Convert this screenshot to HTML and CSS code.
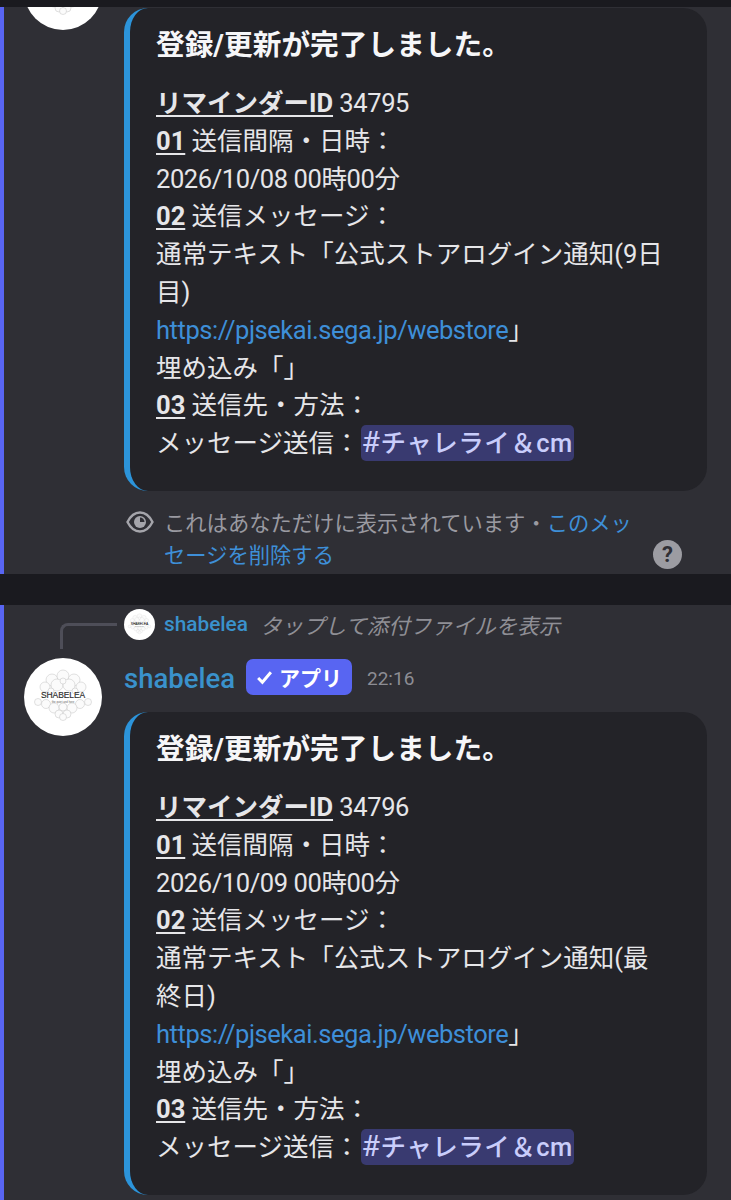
FILE: index.html
```html
<!DOCTYPE html>
<html lang="ja">
<head>
<meta charset="utf-8">
<title>shabelea</title>
<link rel="stylesheet" href="styles.css">
</head>
<body>
<svg class="defs" width="0" height="0" aria-hidden="true">
  <symbol id="logo-art" viewBox="0 0 78 78">
    <circle cx="39" cy="39" r="39" fill="#fff"/>
    <g fill="#fbfbfb" stroke="#bdbdbd" stroke-width=".45">
      <circle cx="28" cy="22" r="6"/><circle cx="39" cy="18" r="6"/><circle cx="50" cy="22" r="6"/>
      <circle cx="21" cy="29" r="5"/><circle cx="33" cy="27" r="6"/><circle cx="45" cy="27" r="6"/><circle cx="57" cy="29" r="5"/>
      <circle cx="27" cy="33" r="3"/><circle cx="39" cy="23" r="3"/><circle cx="51" cy="33" r="3"/>
      <circle cx="14" cy="44" r="3.500"/><circle cx="22" cy="46" r="4.500"/><circle cx="56" cy="46" r="4.500"/><circle cx="64" cy="44" r="3.500"/>
      <circle cx="30" cy="50" r="5"/><circle cx="48" cy="50" r="5"/><circle cx="39" cy="49" r="4"/>
      <circle cx="35" cy="56" r="4"/><circle cx="43" cy="56" r="4"/><circle cx="39" cy="59" r="3.500"/>
    </g>
  </symbol>
  <symbol id="logo" viewBox="0 0 78 78">
    <use href="#logo-art"/>
    <text x="39" y="40" text-anchor="middle" class="logo-name">SHABELEA</text>
    <text x="39" y="45" text-anchor="middle" class="logo-sub">the quiet and here</text>
  </symbol>
</svg>

<main class="page">
  <section class="panel panel-first">
    <div class="message">
      <svg class="avatar avatar-clipped"><use href="#logo-art"/></svg>
      <div class="content">
        <article class="embed">
          <h2 class="embed-title">登録/更新が完了しました。</h2>
          <div class="embed-body">
            <p><b>リマインダーID</b> <span class="num">34795</span></p>
            <p><b>01</b> 送信間隔・日時：</p>
            <p class="num">2026/10/08 00時00分</p>
            <p><b>02</b> 送信メッセージ：</p>
            <p>通常テキスト「公式ストアログイン通知(9日目)</p>
            <p><a class="url" href="#">https://pjsekai.sega.jp/webstore</a>」</p>
            <p>埋め込み「」</p>
            <p><b>03</b> 送信先・方法：</p>
            <p>メッセージ送信：<span class="mention"><span class="hash">#</span>チャレライ＆cm</span></p>
          </div>
        </article>
        <div class="ephemeral">
          <svg class="eye" viewBox="0 0 28 22">
            <path d="M1.500 11C4.500 5 8.500 1.500 14 1.500S23.500 5 26.500 11C23.500 17 19.500 20.500 14 20.500S4.500 17 1.500 11Z" fill="none" stroke="#a5a5ab" stroke-width="2.400"/>
            <circle cx="14" cy="11" r="6" fill="#a5a5ab"/>
            <path d="M14 11V6.500A4.500 4.500 0 0 1 18.500 11Z" fill="#2f2f35"/>
          </svg>
          <p class="ephemeral-text">これはあなただけに表示されています・<a href="#">このメッセージを削除する</a></p>
          <span class="help">?</span>
        </div>
      </div>
    </div>
  </section>

  <section class="panel panel-second">
    <div class="reply">
      <span class="reply-line"></span>
      <svg class="avatar-mini"><use href="#logo"/></svg>
      <span class="reply-name">shabelea</span>
      <em class="reply-text">タップして添付ファイルを表示</em>
    </div>
    <div class="message">
      <svg class="avatar"><use href="#logo"/></svg>
      <div class="content">
        <header class="author">
          <span class="author-name">shabelea</span>
          <span class="app-tag"><svg class="check" viewBox="0 0 16 16"><path d="M2 8.500 6 12.500 14 3" fill="none" stroke="#fff" stroke-width="2.800"/></svg>アプリ</span>
          <time class="time">22:16</time>
        </header>
        <article class="embed">
          <h2 class="embed-title">登録/更新が完了しました。</h2>
          <div class="embed-body">
            <p><b>リマインダーID</b> <span class="num">34796</span></p>
            <p><b>01</b> 送信間隔・日時：</p>
            <p class="num">2026/10/09 00時00分</p>
            <p><b>02</b> 送信メッセージ：</p>
            <p>通常テキスト「公式ストアログイン通知(最終日)</p>
            <p><a class="url" href="#">https://pjsekai.sega.jp/webstore</a>」</p>
            <p>埋め込み「」</p>
            <p><b>03</b> 送信先・方法：</p>
            <p>メッセージ送信：<span class="mention"><span class="hash">#</span>チャレライ＆cm</span></p>
          </div>
        </article>
      </div>
    </div>
  </section>
</main>
</body>
</html>
```

FILE: styles.css
```css
* { box-sizing: border-box; }
html, body { margin: 0; padding: 0; height: 100%; }
body {
  background: #1a1a1f;
  color: #e6e6e9;
  font-family: Roboto, "Noto Sans CJK JP", sans-serif;
  overflow: hidden;
}
.defs { position: absolute; }
.logo-name { font: 400 8.500px "Liberation Sans", sans-serif; fill: #2a2a2a; letter-spacing: -.1px; stroke: #2a2a2a; stroke-width: .15px; }
.logo-sub { font: 400 2.800px "Liberation Sans", sans-serif; fill: #666; }

.page { display: flex; flex-direction: column; gap: 31px; padding-top: 7px; }
.panel { background: #2f2f35; border-left: 4px solid #5865f2; overflow: hidden; }
.panel-first { height: 567px; padding-top: 1px; }
.panel-second { height: 600px; padding-top: 3px; }

.message { display: flex; padding-left: 20px; gap: 22px; align-items: flex-start; }
.avatar { width: 78px; height: 78px; flex: none; display: block; }
.avatar-clipped { margin-top: -56px; }
.content { width: 583px; flex: none; }

.embed {
  height: 483px;
  background: #232328;
  border-radius: 24px;
  border-left: 6px solid #2c94da;
  padding: 17px 39px 0 26px;
}
.embed-title {
  margin: 0 0 20px;
  font-size: 28.700px;
  line-height: 40px;
  font-weight: 700;
  color: #f6f6f8;
}
.embed-body { font-size: 25.500px; line-height: 37.800px; color: #e6e6e9; }
.embed-body p { margin: 0; }
.embed-body b { font-weight: 700; text-decoration: underline; text-underline-offset: 3px; text-decoration-thickness: 1.500px; }
.embed-body a { color: #3e8fd8; text-decoration: none; }
.url { letter-spacing: -.45px; }
.num { letter-spacing: -.4px; }
.mention {
  background: #393a70;
  color: #c9cdfb;
  font-weight: 500;
  border-radius: 5px;
  padding: 3px 1px;
  margin-left: 1px;
  letter-spacing: .5px;
}
.hash { font-weight: 400; font-size: 30px; line-height: 1; }

.ephemeral { display: flex; align-items: flex-start; margin-top: 17px; padding-left: 2px; gap: 10px; position: relative; }
.eye { width: 28px; height: 22px; flex: none; margin-top: 3px; }
.ephemeral-text { margin: 0; font-size: 21.300px; line-height: 32px; color: #9a9aa1; width: 480px; }
.ephemeral-text a { color: #3e8fd8; text-decoration: none; }
.help {
  position: absolute;
  right: 25px;
  top: 32px;
  width: 29px;
  height: 29px;
  border-radius: 50%;
  background: #9c9ca2;
  color: #2f2f35;
  font-size: 22px;
  font-weight: 700;
  line-height: 29px;
  text-align: center;
}

.reply { display: flex; align-items: center; height: 32px; padding-left: 120px; position: relative; margin-bottom: 18px; }
.reply-line {
  position: absolute;
  left: 56px;
  top: 15px;
  width: 57px;
  height: 26px;
  border-left: 3px solid #4e4e58;
  border-top: 3px solid #4e4e58;
  border-top-left-radius: 8px;
}
.avatar-mini { width: 31px; height: 31px; flex: none; display: block; }
.reply-name { margin-left: 9px; font-size: 20.800px; font-weight: 500; color: #3a92cc; }
.reply-text { margin-left: 12px; font-size: 21.500px; color: #8f8f96; }

.author { display: flex; align-items: center; height: 38px; margin: 0 0 16px; }
.author-name { font-size: 27.500px; font-weight: 500; color: #3a92cc; padding-top: 3px; }
.app-tag {
  display: flex;
  align-items: center;
  gap: 6px;
  height: 36px;
  margin-left: 11px;
  padding: 0 10px;
  border-radius: 7px;
  background: #5865f2;
  color: #fff;
  font-size: 21px;
  font-weight: 700;
}
.check { width: 17px; height: 17px; }
.time { margin-left: 15px; font-size: 19px; color: #8d8d94; padding-top: 3px; }
```
